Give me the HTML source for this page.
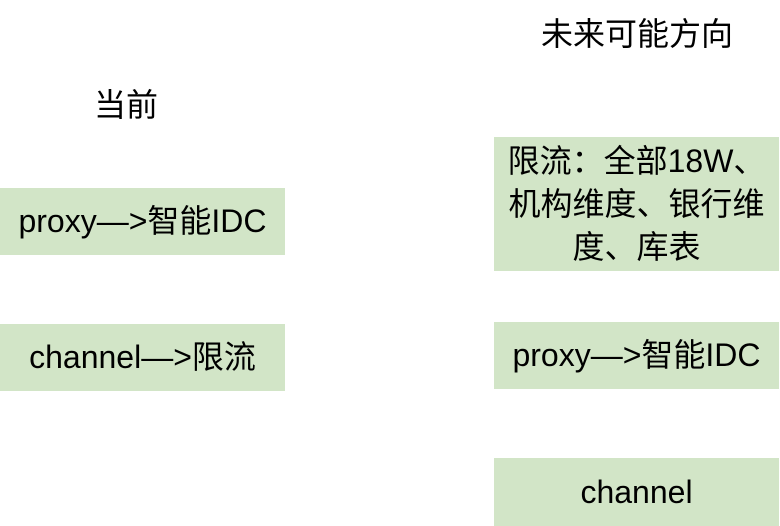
<!DOCTYPE html>
<html><head><meta charset="utf-8"><style>
body{margin:0;width:780px;height:526px;background:#fff;position:relative;overflow:hidden;font-family:"Liberation Sans","Noto Sans CJK SC",sans-serif;color:#000;font-size:32px}
.b{position:absolute;background:#d2e5c7;display:flex;align-items:center;justify-content:center;text-align:center;line-height:43px;white-space:nowrap}
.t{position:absolute;line-height:36px;white-space:nowrap}
</style></head><body>
<div class="t" style="left:541px;top:16px">未来可能方向</div>
<div class="t" style="left:94px;top:87px">当前</div>
<div class="b" style="left:0;top:188px;width:285px;height:67px">proxy—&gt;智能IDC</div>
<div class="b" style="left:0;top:324px;width:285px;height:67px">channel—&gt;限流</div>
<div class="b" style="left:494px;top:137px;width:285px;height:134px">限流：全部18W、<br>机构维度、银行维<br>度、库表</div>
<div class="b" style="left:494px;top:322px;width:285px;height:67px">proxy—&gt;智能IDC</div>
<div class="b" style="left:494px;top:458px;width:285px;height:68px">channel</div>
</body></html>
